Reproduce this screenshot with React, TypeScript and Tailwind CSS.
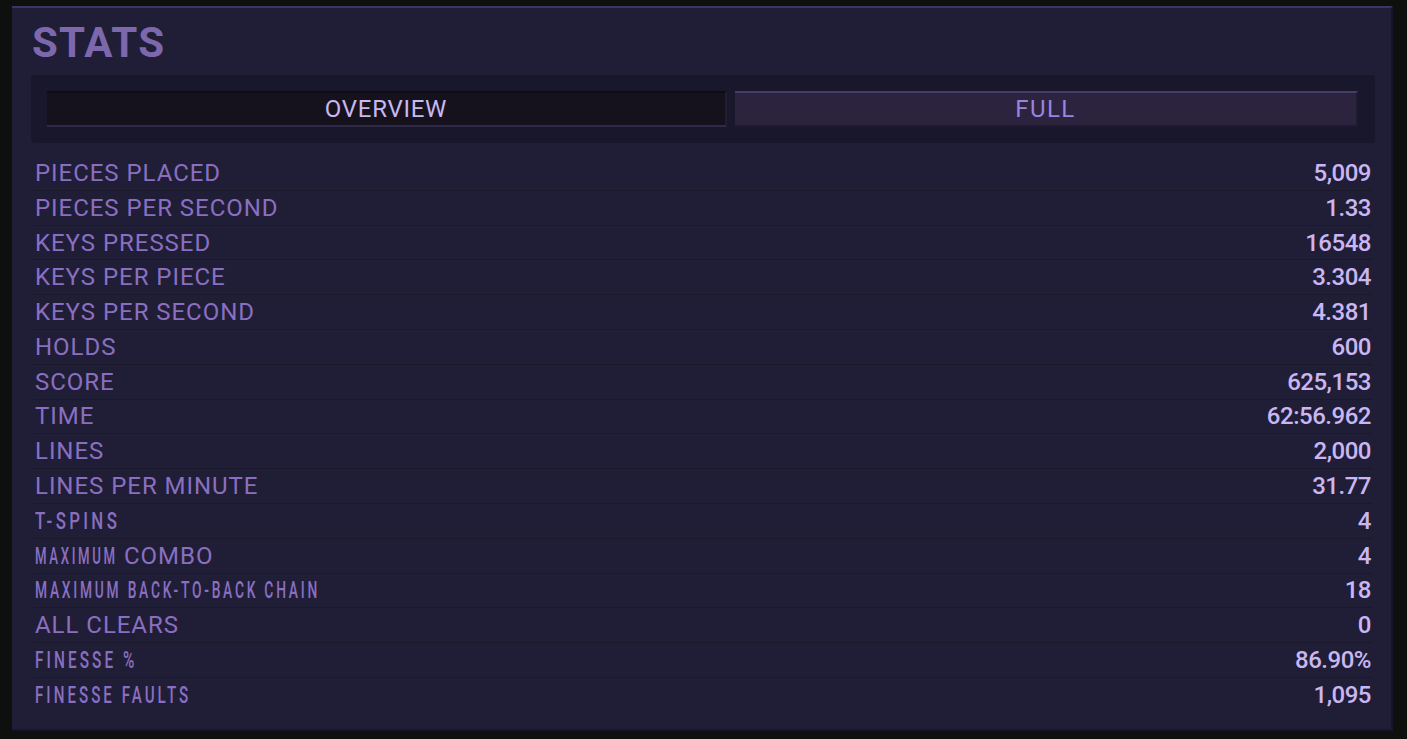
import React from "react";

type Seg = { text: string; narrow?: number; scale?: string };

interface StatRow {
  label: Seg[];
  value: string;
}

const rows: StatRow[] = [
  { label: [{ text: "PIECES PLACED" }], value: "5,009" },
  { label: [{ text: "PIECES PER SECOND" }], value: "1.33" },
  { label: [{ text: "KEYS PRESSED" }], value: "16548" },
  { label: [{ text: "KEYS PER PIECE" }], value: "3.304" },
  { label: [{ text: "KEYS PER SECOND" }], value: "4.381" },
  { label: [{ text: "HOLDS" }], value: "600" },
  { label: [{ text: "SCORE" }], value: "625,153" },
  { label: [{ text: "TIME" }], value: "62:56.962" },
  { label: [{ text: "LINES" }], value: "2,000" },
  { label: [{ text: "LINES PER MINUTE" }], value: "31.77" },
  { label: [{ text: "T-SPINS", narrow: 81, scale: "scale-x-[0.7]" }], value: "4" },
  {
    label: [
      { text: "MAXIMUM", narrow: 89, scale: "scale-x-[0.55]" },
      { text: "COMBO" },
    ],
    value: "4",
  },
  {
    label: [
      { text: "MAXIMUM BACK-TO-BACK CHAIN", narrow: 285, scale: "scale-x-[0.575]" },
    ],
    value: "18",
  },
  { label: [{ text: "ALL CLEARS" }], value: "0" },
  { label: [{ text: "FINESSE %", narrow: 100, scale: "scale-x-[0.64]" }], value: "86.90%" },
  {
    label: [{ text: "FINESSE FAULTS", narrow: 154, scale: "scale-x-[0.63]" }],
    value: "1,095",
  },
];

function Label({ segs }: { segs: Seg[] }) {
  return (
    <div className="flex items-center whitespace-nowrap">
      {segs.map((s, i) =>
        s.narrow ? (
          <span
            key={i}
            className="inline-block overflow-visible"
            style={{ width: s.narrow }}
          >
            <span
              className={`inline-block origin-left font-medium tracking-[0.2em] ${s.scale}`}
            >
              {s.text}
            </span>
          </span>
        ) : (
          <span key={i} className="tracking-[0.04em]">
            {s.text}
          </span>
        )
      )}
    </div>
  );
}

export default function App() {
  return (
    <div
      className="min-h-[739px] w-full bg-[#0d100c] pl-[12px] pt-[6px]"
      style={{ fontFamily: "Roboto, 'DejaVu Sans', sans-serif" }}
    >
      <div className="flex h-[725px] w-[1381px] flex-col border-t-2 border-r-2 border-b-2 border-t-[#3b3468] border-r-[#16142a] border-b-[#16142a] bg-[#201e36] pr-[16px] pl-[19px]">
        <h1 className="mt-[9px] h-[52px] pl-[1px] text-[42px] leading-[52px] font-bold tracking-[0.03em] text-[#7d68ae]">
          STATS
        </h1>

        <div className="mt-[6px] flex h-[68px] gap-[8px] rounded-[3px] bg-[#19172b] py-[16px] pr-[17px] pl-[16px]">
          <button className="flex flex-[680] items-center justify-center border-t-2 border-r-2 border-b-2 border-t-[#0e0c14] border-r-[#221e34] border-b-[#2f2a48] bg-[#15121e] text-[24px] tracking-[0.03em] text-[#c8b8f0]">
            OVERVIEW
          </button>
          <button className="flex flex-[623] items-center justify-center border-t-2 border-r-2 border-b-2 border-t-[#463d66] border-r-[#1e1b30] border-b-[#1e1b30] bg-[#2c233e] text-[24px] tracking-[0.06em] text-[#9a84e0]">
            FULL
          </button>
        </div>

        <div className="mt-[13px] flex flex-col px-[2px]">
          {rows.map((r, i) => (
            <div
              key={i}
              className={`flex h-[34.8px] items-center justify-between px-[2px] text-[24px] ${
                i < rows.length - 1 ? "border-b border-[#1a1829]" : ""
              }`}
            >
              <div className="text-[#8a6fc1]">
                <Label segs={r.label} />
              </div>
              <div className="font-medium tracking-[-0.02em] text-[#c9b6f2]">
                {r.value}
              </div>
            </div>
          ))}
        </div>
      </div>
    </div>
  );
}
